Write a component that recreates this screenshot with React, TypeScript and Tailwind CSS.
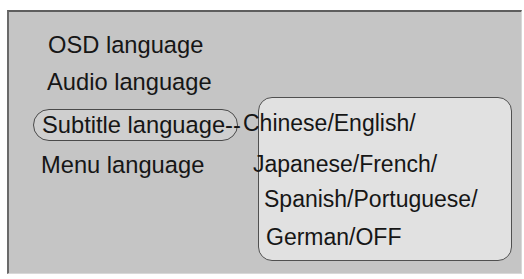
import React from "react";

export default function App() {
  const font = { fontFamily: '"Liberation Sans", Arial, sans-serif' };
  return (
    <div className="w-[524px] h-[279px] bg-white pt-[10px] pl-[7px] overflow-hidden" style={font}>
      <div className="w-[515px] h-[264px] bg-[#c5c5c5] border-t-2 border-l-2 border-r border-b border-t-[#5e5e5e] border-l-[#6a6a6a] border-r-[#d8d8d8] border-b-[#d8d8d8] flex leading-[28px] text-[#161616]">
        <div className="w-[249px] flex flex-col items-start shrink-0 text-[23.7px]">
          <div className="mt-[19px] ml-[39px] whitespace-nowrap">OSD language</div>
          <div className="mt-[9px] ml-[38px] whitespace-nowrap">Audio language</div>
          <div className="mt-[13px] ml-[24px] w-[205px] h-[32px] rounded-full border-[1.5px] border-[#4a4a4a] bg-[#cfcfcf] pl-[8px] pt-[1px] whitespace-nowrap">
            Subtitle language--
          </div>
          <div className="mt-[10px] ml-[32px] whitespace-nowrap">Menu language</div>
        </div>
        <div className="mt-[85px] w-[254px] h-[164px] rounded-[14px] border-[1.5px] border-[#505050] bg-[#e1e1e1] pt-[11px] flex flex-col items-start shrink-0 text-[23px]">
          <div className="ml-[-16px] whitespace-nowrap">Chinese/English/</div>
          <div className="mt-[13px] ml-[-6px] whitespace-nowrap">Japanese/French/</div>
          <div className="mt-[7px] ml-[5px] whitespace-nowrap">Spanish/Portuguese/</div>
          <div className="mt-[10px] ml-[7px] whitespace-nowrap">German/OFF</div>
        </div>
      </div>
    </div>
  );
}
